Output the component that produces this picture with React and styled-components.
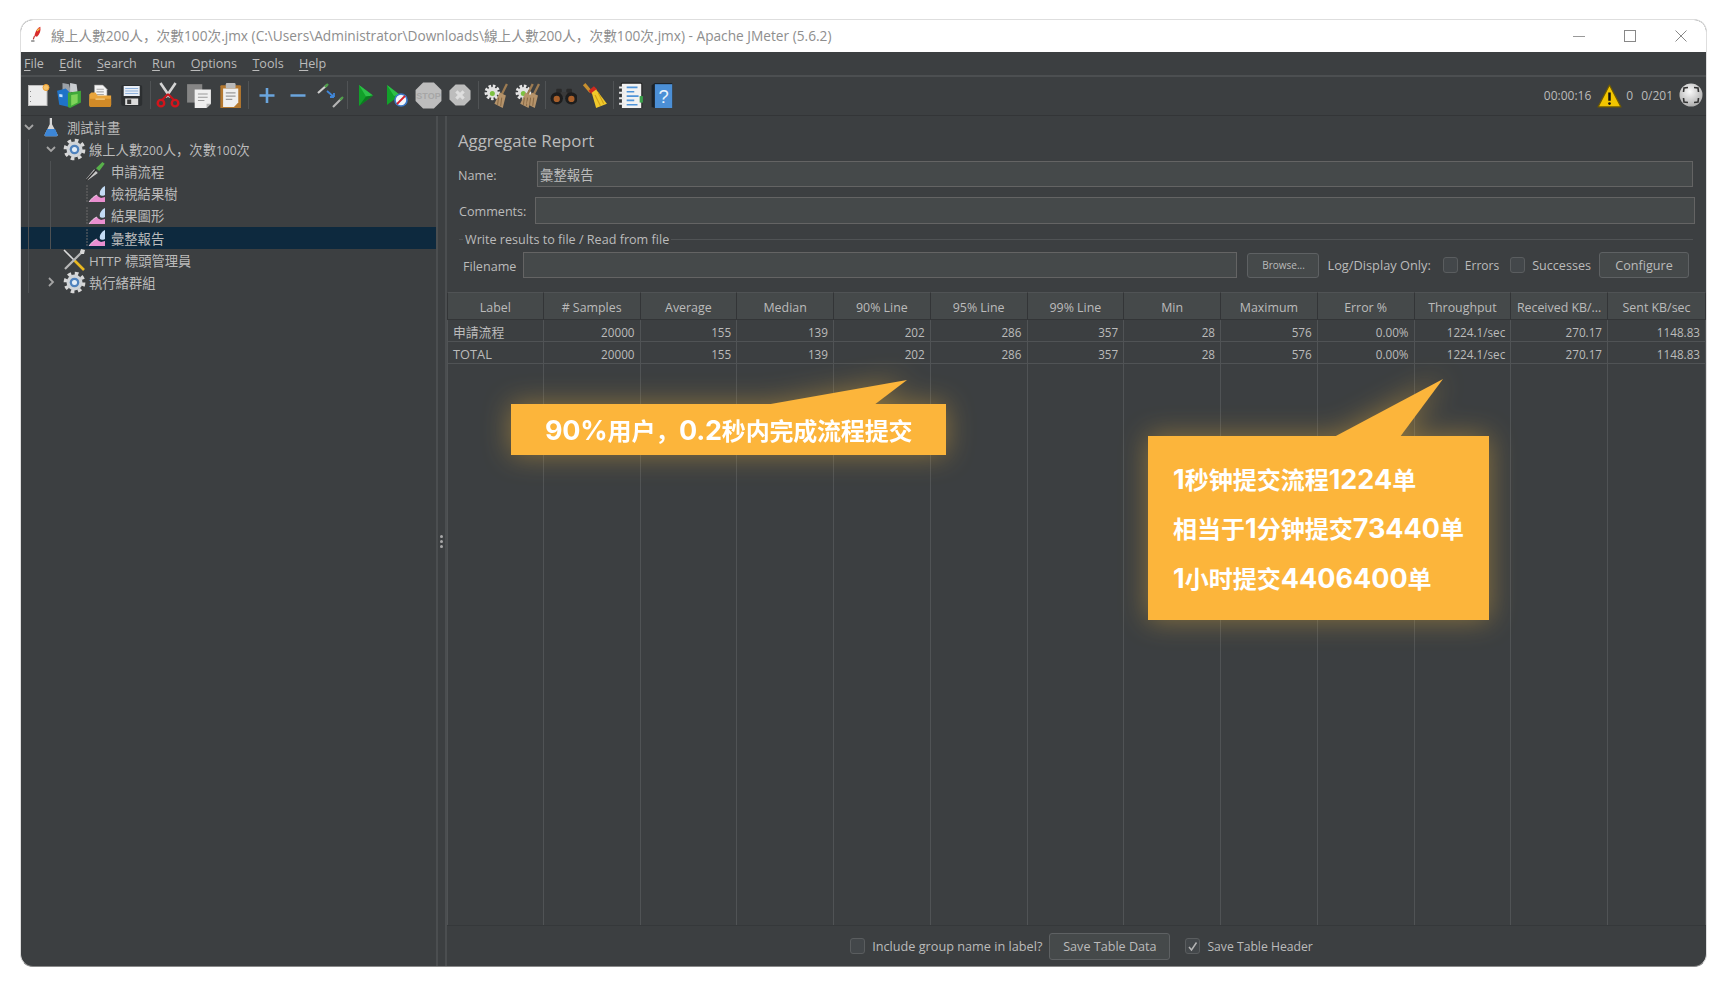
import React from "react";
import styled, { createGlobalStyle } from "styled-components";

const GlobalStyle = createGlobalStyle`
  html, body {
    margin: 0;
    padding: 0;
    background: #fff;
    overflow: hidden;
  }
  * { box-sizing: border-box; }
`;

const UI_FONT = `"Open Sans", "Noto Sans CJK SC", sans-serif`;

const Page = styled.div`
  width: 1727px;
  height: 987px;
  padding: 19px 20px 20px;
  font-family: ${UI_FONT};
  color: #bbbbbb;
`;

const Window = styled.div`
  position: relative;
  width: 1687px;
  height: 948px;
  display: flex;
  flex-direction: column;
  background: #3c3f41;
  border: 1px solid #dedede;
  border-bottom-color: #8a8a8a;
  border-radius: 13px;
  overflow: hidden;
`;

const TitleBar = styled.div`
  flex: 0 0 32px;
  display: flex;
  align-items: center;
  background: #fff;
  padding-left: 6px;
`;

const TitleText = styled.div`
  margin: -2px 0 0 4px;
  font-size: 13.7px;
  color: #8e8e8e;
  white-space: nowrap;
`;

const WinButtons = styled.div`
  margin-left: auto;
  display: flex;
`;

const WinButton = styled.div`
  width: 51px;
  display: flex;
  justify-content: center;
`;

const MenuBar = styled.div`
  flex: 0 0 25px;
  display: flex;
  align-items: center;
  gap: 15.3px;
  padding-left: 3px;
  font-size: 12.6px;
  border-bottom: 2px solid #4c4f51;
  u { text-underline-offset: 2px; }
`;

const ToolBar = styled.div`
  flex: 0 0 39px;
  display: flex;
  align-items: center;
  padding: 0 0 2px 1.35px;
  border-bottom: 1px solid #333537;
`;

const ToolSlot = styled.div`
  width: 31.3px;
  display: flex;
  justify-content: center;
  align-items: center;
`;

const ToolSep = styled.div`
  width: 5px;
  height: 28px;
  display: flex;
  justify-content: center;
  &::before {
    content: "";
    width: 1px;
    background: #505355;
  }
`;

const Status = styled.div`
  margin-left: auto;
  display: flex;
  align-items: center;
  padding-right: 3px;
  font-size: 12px;
`;

const StatusItem = styled.span`
  display: flex;
  margin-left: ${(p) => p.$ml || 0}px;
  white-space: nowrap;
`;

const Main = styled.div`
  flex: 1;
  display: flex;
  min-height: 0;
`;

const TreePane = styled.div`
  width: 415px;
  padding-top: 0.5px;
  font-size: 13.3px;
`;

const Group = styled.div`
  position: relative;
  &::before {
    content: "";
    position: absolute;
    z-index: 1;
    left: ${(p) => p.$line}px;
    top: 0;
    bottom: 0;
    width: 1px;
    background: #4e5153;
  }
`;

const Row = styled.div`
  height: 22.1px;
  display: flex;
  align-items: center;
  padding-left: ${(p) => p.$depth * 22}px;
  background: ${(p) => (p.$selected ? "#0d293e" : "transparent")};
  white-space: nowrap;
`;

const Chevron = styled.div`
  width: 16px;
  display: flex;
  justify-content: center;
`;

const NodeIcon = styled.div`
  width: 30px;
  display: flex;
  justify-content: center;
`;

const TreeNum = styled.span`
  font-size: 12px;
`;

const Splitter = styled.div`
  width: 11px;
  display: flex;
  flex-direction: column;
  justify-content: center;
  align-items: center;
  gap: 2px;
  border-left: 2px solid #4b4e50;
  border-right: 2px solid #4b4e50;
`;

const Dot = styled.i`
  width: 3px;
  height: 3px;
  border-radius: 50%;
  background: #a8a8a8;
`;

const RightPane = styled.div`
  flex: 1;
  min-width: 0;
  display: flex;
  flex-direction: column;
`;

const Heading = styled.div`
  margin: 13px 0 8px 11px;
  height: 24px;
  line-height: 24px;
  font-size: 16.8px;
`;

const FormRow = styled.div`
  display: flex;
  align-items: center;
  height: ${(p) => p.$h}px;
  margin-bottom: ${(p) => p.$mb || 0}px;
  padding: 0 ${(p) => p.$pr}px 0 ${(p) => p.$pl}px;
  font-size: 12.6px;
`;

const FieldLabel = styled.label`
  width: ${(p) => p.$w}px;
  flex: none;
  padding-top: 2px;
`;

const Field = styled.div`
  flex: 1;
  align-self: stretch;
  display: flex;
  align-items: center;
  padding-left: 2px;
  background: #45494a;
  border: 1px solid #646464;
  font-size: 13.4px;
`;

const Legend = styled.div`
  display: flex;
  align-items: center;
  gap: 2px;
  height: 16px;
  margin: 7px 13px 5px 12px;
  font-size: 12.6px;
  white-space: nowrap;
  &::before {
    content: "";
    width: 4px;
    height: 1px;
    background: #505355;
  }
  &::after {
    content: "";
    flex: 1;
    height: 1px;
    background: #505355;
  }
`;

const Button = styled.div`
  display: flex;
  align-items: center;
  justify-content: center;
  flex: none;
  width: ${(p) => p.$w}px;
  height: ${(p) => p.$h || 26}px;
  margin-left: ${(p) => p.$ml || 0}px;
  border: 1px solid #5e6163;
  border-radius: 3px;
  background: #45494a;
  font-size: ${(p) => p.$fs || 12.6}px;
`;

const CheckWrap = styled.div`
  display: flex;
  align-items: center;
  flex: none;
  margin-left: ${(p) => p.$ml || 0}px;
  font-size: ${(p) => p.$fs || 12.6}px;
  white-space: nowrap;
`;

const Box = styled.div`
  width: 15px;
  height: 16px;
  margin-right: 7px;
  flex: none;
  display: flex;
  align-items: center;
  justify-content: center;
  border: 1px solid #5a5d5f;
  border-radius: 3px;
  background: #43474a;
`;

const Table = styled.div`
  flex: 1;
  min-height: 0;
  margin-top: 14px;
  display: grid;
  grid-template-columns: repeat(12, 96.75px) 1fr;
  grid-template-rows: 28px 22px 22px 1fr;
`;

const HeadCell = styled.div`
  display: flex;
  align-items: center;
  justify-content: center;
  padding-top: 2px;
  background: #45494a;
  border-top: 1px solid #505355;
  border-right: 1px solid #333537;
  border-bottom: 1px solid #333537;
  font-size: 12.4px;
  white-space: nowrap;
  &:first-child { border-left: 1px solid #333537; }
`;

const Cell = styled.div`
  display: flex;
  align-items: center;
  justify-content: ${(p) => (p.$left ? "flex-start" : "flex-end")};
  padding: 2px 5px 0;
  border-right: 1px solid #505355;
  border-bottom: 1px solid #505355;
  border-left: ${(p) => (p.$first ? "1px solid #505355" : "none")};
  font-size: ${(p) => (p.$left ? 12.8 : 11.7)}px;
`;

const Filler = styled.div`
  border-right: 1px solid #505355;
  border-left: ${(p) => (p.$first ? "1px solid #505355" : "none")};
`;

const BottomBar = styled.div`
  flex: 0 0 41px;
  display: flex;
  align-items: center;
  justify-content: center;
  padding-left: 10px;
  border-top: 1px solid #35383a;
`;

const Callout = styled.div`
  position: absolute;
  left: ${(p) => p.$x}px;
  top: ${(p) => p.$y}px;
  width: ${(p) => p.$w}px;
  height: ${(p) => p.$h}px;
  display: flex;
  flex-direction: column;
  justify-content: center;
  gap: 15.5px;
  padding-left: ${(p) => p.$pad}px;
  background: #fcb53b;
  color: #fff;
  font-family: "Noto Sans CJK SC", sans-serif;
  font-weight: 700;
  font-size: 24px;
  letter-spacing: ${(p) => p.$ls || 0}px;
  line-height: 33px;
  white-space: nowrap;
  filter: drop-shadow(0 0 14px rgba(252, 190, 60, 0.42));
  &::before {
    content: "";
    position: absolute;
    left: ${(p) => p.$tx}px;
    top: ${(p) => -p.$th + 1}px;
    width: ${(p) => p.$tw}px;
    height: ${(p) => p.$th}px;
    background: #fcb53b;
    clip-path: polygon(0 100%, 100% 0, ${(p) => p.$tp}% 100%);
  }
`;

const Num = styled.span`
  font-family: Inter, "Liberation Sans", sans-serif;
  font-size: 27px;
  font-weight: 700;
`;

const IcoSvg = styled.svg`
  display: block;
`;

/* ---- drawn icons ---- */

const Ico = ({ s = 24, vb = 24, vx = 0, children }) => (
  <IcoSvg width={s} height={s} viewBox={`${vx} 0 ${vb} ${vb}`}>
    {children}
  </IcoSvg>
);

const NewIcon = () => (
  <Ico>
    <rect x="2.5" y="2.5" width="18.5" height="20" fill="#ececec" stroke="#bdbdbd" />
    <path d="M4.5 8v1M4.5 13v1M4.5 18v1" stroke="#888" />
    <circle cx="20" cy="4.5" r="3" fill="#f7c36a" stroke="#f0a030" />
  </Ico>
);
const TemplatesIcon = () => (
  <Ico s={26}>
    <path d="M6 1l6 1 2 8-8-1z" fill="#9aa0a6" />
    <path d="M13 1l6 1 1 8-7-1z" fill="#c9cdd0" />
    <path d="M1 8l8-2 3 3v14l-9-2z" fill="#1f73c8" />
    <path d="M3 11l3 .5v2.500l-3-.5z" fill="#bfe0ff" />
    <path d="M11 10l12-2v11l-10 5-2-1z" fill="#3fa83a" />
    <path d="M14 12l6-1v8l-6 3z" fill="#7fd35a" />
  </Ico>
);
const OpenIcon = () => (
  <Ico s={25} vx={0.8}>
    <path d="M7 2h8l4 4v8H7z" fill="#f4f4f4" stroke="#9a9a9a" strokeWidth=".6" />
    <path d="M9 6h7M9 8.500h7M9 11h7" stroke="#a8a8a8" />
    <path d="M2 11l2-2h4l2 3h13v9a2 2 0 01-2 2H4a2 2 0 01-2-2z" fill="#e9a53c" />
    <path d="M2 15h21v6a2 2 0 01-2 2H4a2 2 0 01-2-2z" fill="#d18a27" />
    <path d="M8 15.500h9" stroke="#f6cf86" strokeWidth="1.2" />
  </Ico>
);
const SaveIcon = () => (
  <Ico vx={0.8}>
    <rect x="2" y="2" width="21" height="21" rx="2" fill="#2c2f31" />
    <rect x="4.5" y="3" width="16" height="10" fill="#e8eef6" />
    <path d="M6 5.500h13M6 8h13M6 10.500h13" stroke="#8fb2dc" />
    <rect x="6" y="15.5" width="13" height="6.5" fill="#dcdcdc" />
    <rect x="8" y="16.5" width="4" height="4.5" fill="#3a3a3a" />
  </Ico>
);
const CutIcon = () => (
  <Ico s={26}>
    <path d="M5 1l9 13M19 1l-9 13" stroke="#d4d4d4" strokeWidth="2.4" />
    <path d="M12 11l-6 6M12 11l6 6" stroke="#c8141a" strokeWidth="2" />
    <circle cx="5.5" cy="19.5" r="3" fill="none" stroke="#d3141b" strokeWidth="2.2" />
    <circle cx="18.5" cy="19.5" r="3" fill="none" stroke="#d3141b" strokeWidth="2.2" />
  </Ico>
);
const CopyIcon = () => (
  <Ico s={26}>
    <rect x="1" y="2" width="14" height="17" fill="#858585" />
    <path d="M8 7h15v13l-4 4H8z" fill="#efefef" />
    <path d="M11 11h9M11 14h9M11 17h6" stroke="#9a9a9a" />
    <path d="M19 24v-4h4z" fill="#b5b5b5" />
  </Ico>
);
const PasteIcon = () => (
  <Ico s={26} vx={0.8}>
    <rect x="3" y="3" width="19" height="22" rx="1" fill="#b4782f" />
    <path d="M5.500 6h14v13l-4 4h-10z" fill="#efefef" />
    <rect x="8" y="1" width="9" height="5" rx="1" fill="#b9b9b9" />
    <path d="M8 10h9M8 13h9M8 16h6" stroke="#9a9a9a" />
  </Ico>
);
const PlusIcon = () => (
  <Ico>
    <path d="M12 5v15M4.500 12.500h15" stroke="#6aa5dd" strokeWidth="2.6" />
  </Ico>
);
const MinusIcon = () => (
  <Ico>
    <path d="M4.500 12.500h15" stroke="#6aa5dd" strokeWidth="2.6" />
  </Ico>
);
const ToggleIcon = () => (
  <Ico s={28} vb={28}>
    <path d="M2 12l9-8" stroke="#cfcfcf" strokeWidth="2.2" />
    <path d="M9 6l3-3" stroke="#4fa04a" strokeWidth="2.4" />
    <path d="M26 17l-9 9" stroke="#b5b5b5" strokeWidth="2.2" />
    <path d="M24 19l3-3" stroke="#4fa04a" strokeWidth="2.2" />
    <path d="M11 10l7 6M18 16v-4M18 16h-4" stroke="#3f86d8" strokeWidth="1.8" fill="none" />
  </Ico>
);
const PlayIcon = () => (
  <Ico>
    <path d="M5 2l14 10.500L5 23z" fill="#12a02a" />
    <path d="M5 2l14 10.500-7 1z" fill="#2dc048" />
    <path d="M5 23l7-9.500 7-1z" fill="#0b7a1f" />
  </Ico>
);
const PlayNoTimersIcon = () => (
  <Ico vx={1}>
    <path d="M3 2l13 10L3 22z" fill="#12a02a" />
    <path d="M3 2l13 10-6 1z" fill="#2dc048" />
    <circle cx="17" cy="17" r="6" fill="#f2f6fb" stroke="#3a78c8" strokeWidth="1.6" />
    <path d="M13 21l8-8" stroke="#d3202a" strokeWidth="1.8" />
  </Ico>
);
const Octagon = ({ size, children }) => (
  <Ico s={size} vb={24}>
    <path d="M7.200 .5h9.600l6.700 6.700v9.600l-6.700 6.700H7.200L.5 16.800V7.200z" fill="#bdbdbd" />
    {children}
  </Ico>
);
const StopIcon = () => (
  <Octagon size={27}>
    <text x="12" y="15" textAnchor="middle" fontSize="8" fontWeight="700" fontFamily="Liberation Sans, sans-serif" fill="#a6a6a6">
      STOP
    </text>
  </Octagon>
);
const ShutdownIcon = () => (
  <Octagon size={22}>
    <path d="M8 8l8 8M16 8l-8 8" stroke="#dedede" strokeWidth="3.4" />
  </Octagon>
);
const Broom = ({ x = 0 }) => (
  <g transform={`translate(${x} 0)`}>
    <path d="M22 1l-5 10" stroke="#9c7b52" strokeWidth="2.2" />
    <path d="M15 9l6 3-3 12-8-4z" fill="#b5936a" />
    <path d="M14 14l-1 7M17 14l-1 8" stroke="#8a6b47" />
  </g>
);
const ClearGear = () => (
  <g>
    <circle cx="8" cy="9" r="6" fill="none" stroke="#e6e6e6" strokeWidth="3" strokeDasharray="2.4 1.6" />
    <circle cx="8" cy="9" r="5.2" fill="#e2e2e2" />
    <circle cx="8" cy="10" r="2.4" fill="#7cc142" />
  </g>
);
const ClearIcon = () => (
  <Ico s={25}>
    <ClearGear />
    <Broom />
  </Ico>
);
const ClearAllIcon = () => (
  <Ico s={25}>
    <ClearGear />
    <Broom x={-5} />
    <Broom x={1} />
  </Ico>
);
const BinocularsIcon = () => (
  <Ico s={27} vx={0.5}>
    <rect x="6" y="6" width="5" height="6" rx="1" fill="#2a2a2a" />
    <rect x="15" y="6" width="5" height="6" rx="1" fill="#2a2a2a" />
    <rect x="10" y="9" width="6" height="4" fill="#3a3a3a" />
    <circle cx="6.500" cy="14.500" r="5.500" fill="#1d1d1d" />
    <circle cx="19.500" cy="14.500" r="5.500" fill="#1d1d1d" />
    <circle cx="6.500" cy="15" r="2.800" fill="#a85f2a" />
    <circle cx="19.500" cy="15" r="2.800" fill="#a85f2a" />
  </Ico>
);
const BroomIcon = () => (
  <Ico s={26} vx={1}>
    <path d="M3 2l6 7" stroke="#c7902f" strokeWidth="3" />
    <path d="M7 8l5-4 3 3-5 4z" fill="#cf2a1e" />
    <path d="M10 10l4-3 10 13-10 4z" fill="#f1c92b" />
    <path d="M13 12l5 10M16 10l5 10" stroke="#cf9f18" />
  </Ico>
);
const LogIcon = () => (
  <Ico s={26} vx={1}>
    <rect x="4" y="1" width="19" height="24" rx="1" fill="#f1f1f1" stroke="#222" />
    <path d="M2 5h5M2 10h5M2 15h5M2 20h5" stroke="#e8e8e8" strokeWidth="1.8" />
    <path d="M9 5h10M9 9h7M9 13h11M9 17h7M9 21h10" stroke="#4e93d8" strokeWidth="1.6" />
    <rect x="21" y="13" width="3" height="6" fill="#3aa04a" />
  </Ico>
);
const HelpIcon = () => (
  <Ico s={26} vx={1.5}>
    <path d="M3 3l3-2h16v23H6l-3-1z" fill="#1c2228" />
    <rect x="6" y="2" width="16" height="22" fill="#4b8fd6" />
    <text x="14" y="19" textAnchor="middle" fontSize="17" fontFamily="Liberation Sans, sans-serif" fill="#eaf3fc">
      ?
    </text>
  </Ico>
);
const WarningIcon = () => (
  <Ico s={25}>
    <path d="M12 2L23 23H1z" fill="#f2c500" stroke="#6f5a00" strokeWidth="1.2" strokeLinejoin="round" />
    <path d="M12 9v8" stroke="#111" strokeWidth="2.4" />
    <circle cx="12" cy="19.700" r="1.3" fill="#111" />
  </Ico>
);
const GlobeIcon = () => (
  <Ico s={24}>
    <defs>
      <radialGradient id="globeFill" cx="45%" cy="35%" r="70%">
        <stop offset="0" stopColor="#fafafa" />
        <stop offset="1" stopColor="#a8a8a8" />
      </radialGradient>
    </defs>
    <circle cx="12" cy="12" r="11.5" fill="url(#globeFill)" />
    <path d="M9 4.500L5 5l-.5 4M15 4.500L19 5l.5 4M9 19.500L5 19l-.5-4M15 19.500l4-.5.5-4" fill="none" stroke="#333" strokeWidth="1.6" />
  </Ico>
);
const FeatherIcon = () => (
  <Ico s={20}>
    <path d="M16 1c-3 1-6 5-7 11l3 1c3-3 5-7 4-12z" fill="#d92b2b" />
    <path d="M9 12l-1.500 4" stroke="#b33" strokeWidth="1.4" />
    <path d="M5 18h4" stroke="#444" strokeWidth="1.2" />
    <path d="M12 6l3-3" stroke="#f5c344" strokeWidth="1.4" />
  </Ico>
);

const ChevronDown = () => (
  <svg width="10" height="7" viewBox="0 0 10 7">
    <path d="M1 1l4 4 4-4" fill="none" stroke="#a4a4a4" strokeWidth="1.8" />
  </svg>
);
const ChevronRight = () => (
  <svg width="7" height="10" viewBox="0 0 7 10">
    <path d="M1 1l4 4-4 4" fill="none" stroke="#a4a4a4" strokeWidth="1.8" />
  </svg>
);
const FlaskIcon = () => (
  <Ico s={22}>
    <path d="M9.500 1h2.500v7l6 11a1.500 1.500 0 01-1.500 2h-11A1.500 1.500 0 014 19l5.500-11z" fill="#d7d7d7" />
    <path d="M6.800 13h8.600l2.600 6a1.500 1.500 0 01-1.500 2h-11A1.500 1.500 0 014 19z" fill="#3d86d6" />
  </Ico>
);
const GearIcon = () => (
  <Ico s={23} vb={22}>
    <circle cx="11" cy="11" r="8.800" fill="none" stroke="#d8d8d8" strokeWidth="3.2" strokeDasharray="3.5 3.41" />
    <circle cx="11" cy="11" r="7.600" fill="#d0d4d8" />
    <circle cx="11" cy="11" r="4.600" fill="#4f82bd" />
    <circle cx="11" cy="11" r="2.400" fill="#e3edf7" />
  </Ico>
);
const PipetteIcon = () => (
  <Ico s={22}>
    <path d="M1 20L10 9l4 4L3 21z" fill="#c8c8c8" />
    <path d="M1.500 21L12 9.500" stroke="#2a2a2a" strokeWidth="1.4" />
    <path d="M12 8l7-7 2.500 2-6 8z" fill="#58b04a" />
  </Ico>
);
const GraphIcon = () => (
  <Ico s={22} vb={22}>
    <path d="M2 2v17" stroke="#6b6b6b" strokeDasharray="2 1" />
    <path d="M4 19c2-3 5-6 8-7 1 2 3 2 4 3l4-1v5z" fill="#ea8fd0" />
    <path d="M4 19c2-3 5-6 8-7" fill="none" stroke="#f7e6f2" strokeWidth=".8" />
    <path d="M20 3c-4 2-6 6-5 9 1 1 4 1 5 0z" fill="#c4dcf5" />
  </Ico>
);
const ToolsIcon = () => (
  <Ico s={24}>
    <path d="M2 2l11 11" stroke="#dcdcdc" strokeWidth="1.6" />
    <path d="M12 12l10 10" stroke="#e9b820" strokeWidth="2.6" />
    <path d="M21 3L3 21" stroke="#b8b8b8" strokeWidth="2.2" />
    <path d="M19 1l4 1-1 4-3 0-1-2z" fill="#d8d8d8" />
  </Ico>
);

const Check = () => (
  <svg width="11" height="11" viewBox="0 0 11 11">
    <path d="M2 6l2.500 3L9.500 1.500" fill="none" stroke="#b5b5b5" strokeWidth="1.5" />
  </svg>
);

const MENUS = ["File", "Edit", "Search", "Run", "Options", "Tools", "Help"];

const TOOLS = [
  [NewIcon, TemplatesIcon, OpenIcon, SaveIcon],
  [CutIcon, CopyIcon, PasteIcon],
  [PlusIcon, MinusIcon, ToggleIcon],
  [PlayIcon, PlayNoTimersIcon, StopIcon, ShutdownIcon],
  [ClearIcon, ClearAllIcon],
  [BinocularsIcon, BroomIcon],
  [LogIcon, HelpIcon],
];

const COLUMNS = [
  "Label", "# Samples", "Average", "Median", "90% Line", "95% Line", "99% Line",
  "Min", "Maximum", "Error %", "Throughput", "Received KB/...", "Sent KB/sec",
];

const ROWS = [
  ["申請流程", "20000", "155", "139", "202", "286", "357", "28", "576", "0.00%", "1224.1/sec", "270.17", "1148.83"],
  ["TOTAL", "20000", "155", "139", "202", "286", "357", "28", "576", "0.00%", "1224.1/sec", "270.17", "1148.83"],
];

const TITLE =
  "線上人數200人，次數100次.jmx (C:\\Users\\Administrator\\Downloads\\線上人數200人，次數100次.jmx) - Apache JMeter (5.6.2)";

const Node = ({ depth, open, icon: Icon, selected, children }) => (
  <Row $depth={depth} $selected={selected}>
    <Chevron>
      {open === true && <ChevronDown />}
      {open === false && <ChevronRight />}
    </Chevron>
    <NodeIcon>
      <Icon />
    </NodeIcon>
    <span>{children}</span>
  </Row>
);

const App = () => (
  <Page>
    <GlobalStyle />
    <Window>
      <TitleBar>
        <FeatherIcon />
        <TitleText>{TITLE}</TitleText>
        <WinButtons>
          <WinButton>
            <svg width="12" height="12" viewBox="0 0 12 12">
              <path d="M0 6.500h12" stroke="#999" />
            </svg>
          </WinButton>
          <WinButton>
            <svg width="12" height="12" viewBox="0 0 12 12">
              <rect x=".5" y=".5" width="11" height="11" fill="none" stroke="#888" />
            </svg>
          </WinButton>
          <WinButton>
            <svg width="12" height="12" viewBox="0 0 12 12">
              <path d="M.5.500l11 11M11.500.500l-11 11" stroke="#888" />
            </svg>
          </WinButton>
        </WinButtons>
      </TitleBar>

      <MenuBar>
        {MENUS.map((m) => (
          <span key={m}>
            <u>{m[0]}</u>
            {m.slice(1)}
          </span>
        ))}
      </MenuBar>

      <ToolBar>
        {TOOLS.map((group, i) => (
          <React.Fragment key={i}>
            {i > 0 && <ToolSep />}
            {group.map((Icon, j) => (
              <ToolSlot key={j}>
                <Icon />
              </ToolSlot>
            ))}
          </React.Fragment>
        ))}
        <Status>
          <StatusItem>00:00:16</StatusItem>
          <StatusItem $ml={6}><WarningIcon /></StatusItem>
          <StatusItem $ml={4}>0</StatusItem>
          <StatusItem $ml={8}>0/201</StatusItem>
          <StatusItem $ml={6}><GlobeIcon /></StatusItem>
        </Status>
      </ToolBar>

      <Main>
        <TreePane>
          <Node depth={0} open icon={FlaskIcon}>測試計畫</Node>
          <Group $line={7}>
            <Node depth={1} open icon={GearIcon}>
              線上人數<TreeNum>200</TreeNum>人，次數<TreeNum>100</TreeNum>次
            </Node>
            <Group $line={29}>
              <Node depth={2} icon={PipetteIcon}>申請流程</Node>
              <Node depth={2} icon={GraphIcon}>檢視結果樹</Node>
              <Node depth={2} icon={GraphIcon}>結果圖形</Node>
              <Node depth={2} icon={GraphIcon} selected>彙整報告</Node>
            </Group>
            <Node depth={1} icon={ToolsIcon}>HTTP 標頭管理員</Node>
            <Node depth={1} open={false} icon={GearIcon}>執行緒群組</Node>
          </Group>
        </TreePane>

        <Splitter>
          <Dot />
          <Dot />
          <Dot />
        </Splitter>

        <RightPane>
          <Heading>Aggregate Report</Heading>
          <FormRow $h={26} $mb={10} $pl={11} $pr={13}>
            <FieldLabel $w={79}>Name:</FieldLabel>
            <Field>彙整報告</Field>
          </FormRow>
          <FormRow $h={27} $pl={12} $pr={11}>
            <FieldLabel $w={76}>Comments:</FieldLabel>
            <Field />
          </FormRow>
          <Legend>Write results to file / Read from file</Legend>
          <FormRow $h={26} $pl={16} $pr={17}>
            <FieldLabel $w={60}>Filename</FieldLabel>
            <Field />
            <Button $w={72} $h={25} $fs={10} $ml={10}>Browse...</Button>
            <CheckWrap $ml={8} $fs={12.8}>Log/Display Only:</CheckWrap>
            <CheckWrap $ml={12} $fs={12}><Box />Errors</CheckWrap>
            <CheckWrap $ml={11}><Box />Successes</CheckWrap>
            <Button $w={90} $ml={8}>Configure</Button>
          </FormRow>

          <Table>
            {COLUMNS.map((c) => (
              <HeadCell key={c}>{c}</HeadCell>
            ))}
            {ROWS.map((row) =>
              row.map((v, i) => (
                <Cell key={row[0] + i} $left={i === 0} $first={i === 0}>
                  {v}
                </Cell>
              ))
            )}
            {COLUMNS.map((c, i) => (
              <Filler key={c} $first={i === 0} />
            ))}
          </Table>

          <BottomBar>
            <CheckWrap $fs={12.7}><Box />Include group name in label?</CheckWrap>
            <Button $w={121} $h={27} $ml={7}>Save Table Data</Button>
            <CheckWrap $ml={15} $fs={12.2}><Box><Check /></Box>Save Table Header</CheckWrap>
          </BottomBar>
        </RightPane>
      </Main>

      <Callout $x={490} $y={384} $w={435} $h={51} $pad={34} $ls={-0.2} $tx={254} $tw={142} $th={25} $tp={76.8}>
        <div><Num>90%</Num>用户，<Num>0.2</Num>秒内完成流程提交</div>
      </Callout>
      <Callout $x={1127} $y={416} $w={341} $h={184} $pad={25} $tx={186} $tw={109} $th={58} $tp={60.5}>
        <div><Num>1</Num>秒钟提交流程<Num>1224</Num>单</div>
        <div>相当于<Num>1</Num>分钟提交<Num>73440</Num>单</div>
        <div><Num>1</Num>小时提交<Num>4406400</Num>单</div>
      </Callout>
    </Window>
  </Page>
);

export default App;
